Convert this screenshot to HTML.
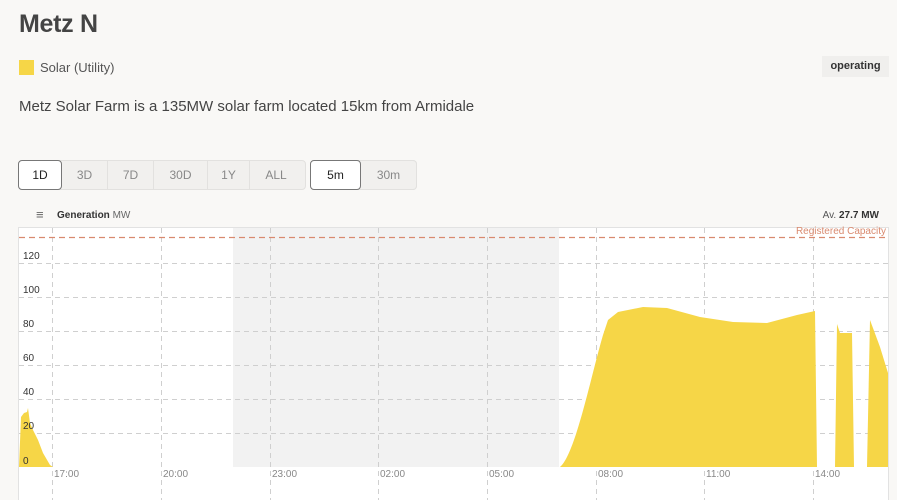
<!DOCTYPE html>
<html><head><meta charset="utf-8"><style>
body{margin:0;width:897px;height:500px;overflow:hidden;background:#f9f8f6;font-family:"Liberation Sans",sans-serif;color:#353535;position:relative}
.a{position:absolute}
h1{position:absolute;left:19px;top:10px;margin:0;font-size:25px;font-weight:bold;color:#444;letter-spacing:-0.3px}
.btn{position:absolute;top:160px;height:30px;box-sizing:border-box;border:1px solid #e2e1df;background:#f1f0ee;font-size:12px;color:#888;text-align:center;line-height:29px}
.sel{background:#fff;border:1px solid #777;color:#222;border-radius:4px}
</style></head><body>
<h1>Metz N</h1>
<div class="a" style="left:19px;top:60px;width:15px;height:15px;background:#f6d647"></div>
<div class="a" style="left:40px;top:60px;font-size:13px;color:#555">Solar (Utility)</div>
<div class="a" style="left:822px;top:56px;width:67px;height:21px;background:#f0efed;font-size:11px;font-weight:bold;line-height:21px;text-align:center;color:#333">operating</div>
<div class="a" style="left:19px;top:98px;font-size:15px;color:#444">Metz Solar Farm is a 135MW solar farm located 15km from Armidale</div>

<div class="btn" style="left:18px;width:288px;border-radius:4px"></div>
<div class="btn sel" style="left:18px;width:44px">1D</div>
<div class="btn" style="left:62px;width:46px;border-width:1px 1px 1px 0">3D</div>
<div class="btn" style="left:108px;width:46px;border-width:1px 1px 1px 0">7D</div>
<div class="btn" style="left:154px;width:54px;border-width:1px 1px 1px 0">30D</div>
<div class="btn" style="left:208px;width:42px;border-width:1px 1px 1px 0">1Y</div>
<div class="btn" style="left:250px;width:52px;border-width:1px 0 1px 0">ALL</div>
<div class="btn" style="left:310px;width:107px;border-radius:4px"></div>
<div class="btn sel" style="left:310px;width:51px">5m</div>
<div class="btn" style="left:361px;width:56px;border-width:1px 0 1px 0;border-radius:0 4px 4px 0;border-right:1px solid #e2e1df">30m</div>

<div class="a" style="left:36px;top:207px;font-size:13px;color:#666">≡</div>
<div class="a" style="left:57px;top:210px;font-size:10px;color:#333"><b>Generation</b> <span style="color:#666">MW</span></div>
<div class="a" style="right:18px;top:210px;font-size:10px;color:#555">Av. <b style="color:#333">27.7 MW</b></div>

<svg class="a" style="left:0;top:0" width="897" height="500">
<rect x="18.5" y="227.5" width="870" height="280" fill="#fff" stroke="#e2e2e2"/>
<rect x="233" y="228" width="326" height="239" fill="#f2f2f2"/>
<g stroke="#cfcfcf" stroke-dasharray="5,4" stroke-width="1">
<line x1="19" x2="888" y1="263.5" y2="263.5"/><line x1="19" x2="888" y1="297.5" y2="297.5"/>
<line x1="19" x2="888" y1="331.5" y2="331.5"/><line x1="19" x2="888" y1="365.5" y2="365.5"/>
<line x1="19" x2="888" y1="399.5" y2="399.5"/><line x1="19" x2="888" y1="433.5" y2="433.5"/>
<line x1="52.5" x2="52.5" y1="228" y2="500"/><line x1="161.5" x2="161.5" y1="228" y2="500"/>
<line x1="270.5" x2="270.5" y1="228" y2="500"/><line x1="378.5" x2="378.5" y1="228" y2="500"/>
<line x1="487.5" x2="487.5" y1="228" y2="500"/><line x1="596.5" x2="596.5" y1="228" y2="500"/>
<line x1="704.5" x2="704.5" y1="228" y2="500"/><line x1="813.5" x2="813.5" y1="228" y2="500"/>
</g>
<g fill="#f6d647">
<path d="M19,467 L21,417 24,413 27,412 28,408 30,423 33,430 38,440 43,453 50,465 53,467Z"/>
<path d="M560,467 C575,455 590,380 603,335 L608,320 618,312 643,307 667,308 700,317 733,322 767,323 797,315 815,311 817,467Z"/>
<path d="M835,467 L837,324 840,333 852,333 854,467Z"/>
<path d="M867,467 L870,320 880,347 888,373 888,467Z"/>
</g>
<line x1="19" x2="888" y1="237.5" y2="237.5" stroke="#d98a6f" stroke-dasharray="6,4" stroke-width="1.3"/>
<text x="886" y="234" text-anchor="end" font-size="10" fill="#d98a6f" font-family="Liberation Sans">Registered Capacity</text>
<g font-size="10" fill="#333" font-family="Liberation Sans">
<text x="23" y="259">120</text><text x="23" y="293">100</text><text x="23" y="327">80</text>
<text x="23" y="361">60</text><text x="23" y="395">40</text><text x="23" y="429">20</text><text x="23" y="464">0</text>
</g>
<g font-size="10" fill="#888" font-family="Liberation Sans">
<text x="54" y="477">17:00</text><text x="163" y="477">20:00</text><text x="272" y="477">23:00</text>
<text x="380" y="477">02:00</text><text x="489" y="477">05:00</text><text x="598" y="477">08:00</text>
<text x="706" y="477">11:00</text><text x="815" y="477">14:00</text>
</g>
</svg>
</body></html>
